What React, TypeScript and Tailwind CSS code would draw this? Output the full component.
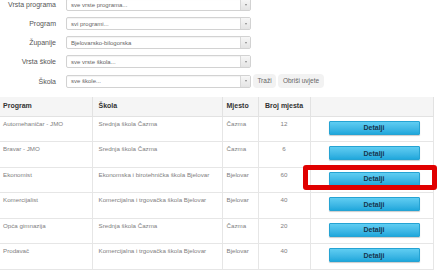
import React from "react";

const filters = [
  { label: "Vrsta programa", value: "sve vrste programa..." },
  { label: "Program", value: "svi programi..." },
  { label: "Županije", value: "Bjelovarsko-bilogorska" },
  { label: "Vrsta škole", value: "sve vrste škola..." },
  { label: "Škola", value: "sve škole..." },
];

const rows = [
  ["Automehaničar - JMO", "Srednja škola Čazma", "Čazma", "12"],
  ["Bravar - JMO", "Srednja škola Čazma", "Čazma", "6"],
  ["Ekonomist", "Ekonomska i birotehnička škola Bjelovar", "Bjelovar", "60"],
  ["Komercijalist", "Komercijalna i trgovačka škola Bjelovar", "Bjelovar", "40"],
  ["Opća gimnazija", "Srednja škola Čazma", "Čazma", "20"],
  ["Prodavač", "Komercijalna i trgovačka škola Bjelovar", "Bjelovar", "40"],
];

function Select({ value }: { value: string }) {
  return (
    <div className="ml-[10px] flex h-[13px] w-[185px] items-stretch rounded-[2px] border border-[#d2d2d2] bg-white shadow-[inset_0_1px_1px_rgba(0,0,0,0.05)]">
      <div className="flex flex-1 items-center pl-[4px] text-[6px] leading-none text-[#666]">{value}</div>
      <div className="flex w-[10px] items-center justify-center border-l border-[#d8d8d8] bg-gradient-to-b from-[#f7f7f7] to-[#e4e4e4]">
        <span className="block h-0 w-0 border-x-[1.5px] border-t-[2px] border-x-transparent border-t-[#888]" />
      </div>
    </div>
  );
}

export default function App() {
  return (
    <div className="relative h-[270px] w-[440px] overflow-hidden bg-white font-['Liberation_Sans',Arial,sans-serif]">
      <div className="-mt-[2px] flex flex-col gap-[6px]">
        {filters.map((f, i) => (
          <div key={f.label} className="flex items-center">
            <div className="w-[56px] text-right text-[7px] leading-none text-[#555]">{f.label}</div>
            <Select value={f.value} />
            {i === filters.length - 1 && (
              <div className="ml-[2px] flex gap-[2px]">
                <div className="flex h-[14px] w-[23px] items-center justify-center rounded-[4px] bg-[#f2f2f2] text-[6.5px] text-[#666]">Traži</div>
                <div className="flex h-[14px] w-[46px] items-center justify-center rounded-[4px] bg-[#f2f2f2] text-[6.5px] text-[#666]">Obriši uvjete</div>
              </div>
            )}
          </div>
        ))}
      </div>

      <table className="mt-[9px] w-[433px] table-fixed border-collapse">
        <colgroup>
          <col className="w-[92px]" />
          <col className="w-[130px]" />
          <col className="w-[36px]" />
          <col className="w-[52px]" />
          <col className="w-[123px]" />
        </colgroup>
        <thead>
          <tr className="h-[19px] bg-[#f5f5f5] text-left text-[7px] font-bold text-[#333]">
            <th className="border-r border-b border-[#e2e2e2] pl-[3px] font-bold">Program</th>
            <th className="border-r border-b border-[#e2e2e2] pl-[6px] font-bold">Škola</th>
            <th className="border-r border-b border-[#e2e2e2] pl-[4px] font-bold">Mjesto</th>
            <th className="border-r border-b border-[#e2e2e2] text-center font-bold">Broj mjesta</th>
            <th className="border-r border-b border-[#e2e2e2]"></th>
          </tr>
        </thead>
        <tbody>
          {rows.map((r) => (
            <tr key={r[0]} className="h-[25.6px] align-top text-[6.2px] leading-[7px] text-[#808080]">
              <td className="border-r border-b border-[#e6e6e6] pl-[3px] pt-[3px]">{r[0]}</td>
              <td className="border-r border-b border-[#e6e6e6] pl-[6px] pt-[3px] whitespace-nowrap">{r[1]}</td>
              <td className="border-r border-b border-[#e6e6e6] pl-[4px] pt-[3px]">{r[2]}</td>
              <td className="border-r border-b border-[#e6e6e6] pt-[3px] text-center">{r[3]}</td>
              <td className="border-r border-b border-[#e6e6e6] pt-[4px]">
                <div className="ml-[18px] flex h-[14px] w-[91px] items-center justify-center rounded-[1px] border border-[#25a3d3] bg-gradient-to-b from-[#5fcdf2] to-[#1fa8dc] text-[7px] font-bold text-[#16364f] shadow-[0_1px_1px_rgba(0,0,0,0.2)]">
                  Detalji
                </div>
              </td>
            </tr>
          ))}
        </tbody>
      </table>

      <div className="absolute left-[303px] top-[165px] h-[25px] w-[134px] rounded-[3px] border-[5px] border-[#e00000]" />
    </div>
  );
}
